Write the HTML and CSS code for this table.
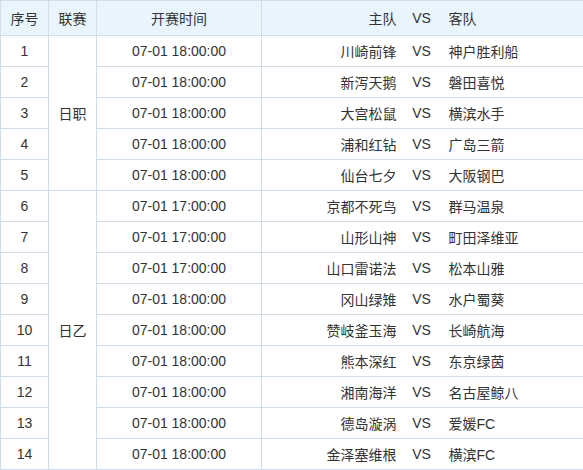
FILE: index.html
```html
<!DOCTYPE html>
<html lang="zh">
<head>
<meta charset="utf-8">
<title>赛程</title>
<link rel="stylesheet" href="styles.css">
</head>
<body>
<table class="schedule">
  <colgroup>
    <col class="c-no">
    <col class="c-league">
    <col class="c-time">
    <col class="c-home">
    <col class="c-vs">
    <col class="c-away">
  </colgroup>
  <thead>
    <tr>
      <th>序号</th>
      <th>联赛</th>
      <th>开赛时间</th>
      <th class="home">主队</th>
      <th class="vs">VS</th>
      <th class="away">客队</th>
    </tr>
  </thead>
  <tbody>
    <tr><td>1</td><td class="league" rowspan="5">日职</td><td>07-01 18:00:00</td><td class="home">川崎前锋</td><td class="vs">VS</td><td class="away">神户胜利船</td></tr>
    <tr><td>2</td><td>07-01 18:00:00</td><td class="home">新泻天鹅</td><td class="vs">VS</td><td class="away">磐田喜悦</td></tr>
    <tr><td>3</td><td>07-01 18:00:00</td><td class="home">大宫松鼠</td><td class="vs">VS</td><td class="away">横滨水手</td></tr>
    <tr><td>4</td><td>07-01 18:00:00</td><td class="home">浦和红钻</td><td class="vs">VS</td><td class="away">广岛三箭</td></tr>
    <tr><td>5</td><td>07-01 18:00:00</td><td class="home">仙台七夕</td><td class="vs">VS</td><td class="away">大阪钢巴</td></tr>
    <tr><td>6</td><td class="league" rowspan="9">日乙</td><td>07-01 17:00:00</td><td class="home">京都不死鸟</td><td class="vs">VS</td><td class="away">群马温泉</td></tr>
    <tr><td>7</td><td>07-01 17:00:00</td><td class="home">山形山神</td><td class="vs">VS</td><td class="away">町田泽维亚</td></tr>
    <tr><td>8</td><td>07-01 17:00:00</td><td class="home">山口雷诺法</td><td class="vs">VS</td><td class="away">松本山雅</td></tr>
    <tr><td>9</td><td>07-01 18:00:00</td><td class="home">冈山绿雉</td><td class="vs">VS</td><td class="away">水户蜀葵</td></tr>
    <tr><td>10</td><td>07-01 18:00:00</td><td class="home">赞岐釜玉海</td><td class="vs">VS</td><td class="away">长崎航海</td></tr>
    <tr><td>11</td><td>07-01 18:00:00</td><td class="home">熊本深红</td><td class="vs">VS</td><td class="away">东京绿茵</td></tr>
    <tr><td>12</td><td>07-01 18:00:00</td><td class="home">湘南海洋</td><td class="vs">VS</td><td class="away">名古屋鲸八</td></tr>
    <tr><td>13</td><td>07-01 18:00:00</td><td class="home">德岛漩涡</td><td class="vs">VS</td><td class="away">爱媛FC</td></tr>
    <tr><td>14</td><td>07-01 18:00:00</td><td class="home">金泽塞维根</td><td class="vs">VS</td><td class="away">横滨FC</td></tr>
  </tbody>
</table>
</body>
</html>
```
FILE: styles.css
```css
html, body {
  margin: 0;
  padding: 0;
  background: #ffffff;
}

.schedule {
  border-collapse: collapse;
  table-layout: fixed;
  width: 583px;
  font-family: "Liberation Sans", "Noto Sans CJK SC", sans-serif;
  font-size: 14px;
  color: #333333;
}

.c-no { width: 48px; }
.c-league { width: 48px; }
.c-time { width: 165px; }
.c-home { width: 139px; }
.c-vs { width: 42px; }
.c-away { width: 141px; }

.schedule th,
.schedule td {
  border: 1px solid #cfdeea;
  padding: 0;
  text-align: center;
  font-weight: normal;
  white-space: nowrap;
}

.schedule thead th {
  background: #e8f5fd;
  height: 34px;
}

.schedule tbody td {
  height: 30px;
}

.schedule .home {
  text-align: right;
  padding-right: 4px;
  border-right: none;
}

.schedule .vs {
  text-align: center;
  border-left: none;
  border-right: none;
}

.schedule .away {
  text-align: left;
  padding-left: 6px;
  border-left: none;
}
```
